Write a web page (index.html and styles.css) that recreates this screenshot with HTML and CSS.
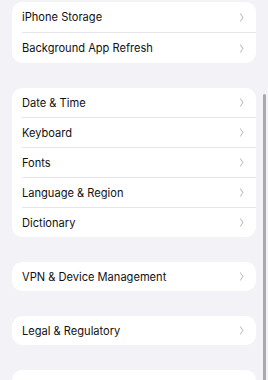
FILE: index.html
```html
<!DOCTYPE html>
<html>
<head>
<meta charset="utf-8">
<link rel="stylesheet" href="styles.css">
</head>
<body>
<div class="page">
  <div class="group first">
    <div class="row"><span class="label">iPhone Storage</span><svg class="chev" viewBox="0 0 5 9"><path d="M1.5 1 L4 4.5 L1.5 8"/></svg></div>
    <div class="row"><span class="label">Background App Refresh</span><svg class="chev" viewBox="0 0 5 9"><path d="M1.5 1 L4 4.5 L1.5 8"/></svg></div>
  </div>
  <div class="group">
    <div class="row"><span class="label">Date &amp; Time</span><svg class="chev" viewBox="0 0 5 9"><path d="M1.5 1 L4 4.5 L1.5 8"/></svg></div>
    <div class="row"><span class="label">Keyboard</span><svg class="chev" viewBox="0 0 5 9"><path d="M1.5 1 L4 4.5 L1.5 8"/></svg></div>
    <div class="row"><span class="label">Fonts</span><svg class="chev" viewBox="0 0 5 9"><path d="M1.5 1 L4 4.5 L1.5 8"/></svg></div>
    <div class="row"><span class="label">Language &amp; Region</span><svg class="chev" viewBox="0 0 5 9"><path d="M1.5 1 L4 4.5 L1.5 8"/></svg></div>
    <div class="row"><span class="label">Dictionary</span><svg class="chev" viewBox="0 0 5 9"><path d="M1.5 1 L4 4.5 L1.5 8"/></svg></div>
  </div>
  <div class="group">
    <div class="row"><span class="label">VPN &amp; Device Management</span><svg class="chev" viewBox="0 0 5 9"><path d="M1.5 1 L4 4.5 L1.5 8"/></svg></div>
  </div>
  <div class="group">
    <div class="row"><span class="label">Legal &amp; Regulatory</span><svg class="chev" viewBox="0 0 5 9"><path d="M1.5 1 L4 4.5 L1.5 8"/></svg></div>
  </div>
  <div class="group">
    <div class="row empty"></div>
  </div>
</div>
<div class="scrollbar"></div>
</body>
</html>
```
FILE: styles.css
```css
html, body {
  margin: 0;
  padding: 0;
  background: #f2f2f7;
  width: 268px;
  height: 380px;
  overflow: hidden;
}
.page {
  display: flex;
  flex-direction: column;
  gap: 25px;
  padding: 2px 12px 0 12px;
  font-family: Inter, "Liberation Sans", sans-serif;
}
.group {
  background: #ffffff;
  border-radius: 10px;
  display: flex;
  flex-direction: column;
}
.row {
  height: 29px;
  display: flex;
  align-items: center;
  justify-content: space-between;
  margin-left: 10px;
  padding-right: 12px;
  border-top: 1px solid #e6e6ea;
}
.row:first-child {
  border-top: none;
}
.first .row {
  height: 30px;
}
.label {
  font-size: 11.1px;
  color: #111113;
}
.chev {
  width: 5px;
  height: 9px;
  fill: none;
  stroke: #c4c4c8;
  stroke-width: 1.2;
  stroke-linecap: round;
  stroke-linejoin: round;
}
.scrollbar {
  position: absolute;
  left: 263px;
  top: 94px;
  width: 2.5px;
  height: 300px;
  border-radius: 2px;
  background: #a9a9ad;
}
```
